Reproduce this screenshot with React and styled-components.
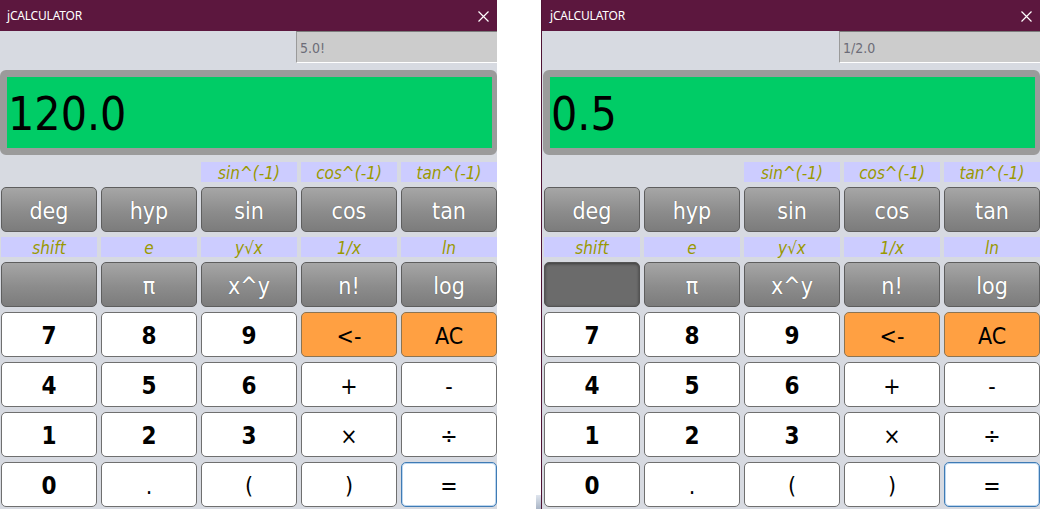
import React from 'react';
import styled, { createGlobalStyle, css } from 'styled-components';

const GlobalStyle = createGlobalStyle`
  html, body {
    margin: 0;
    padding: 0;
    background: #fff;
    overflow: hidden;
  }
  body {
    font-family: "DejaVu Sans Condensed", "DejaVu Sans", sans-serif;
  }
`;

// layout of the keypad, row by row
const ROWS = [
  { type: 'label', items: [null, null, 'sin^(-1)', 'cos^(-1)', 'tan^(-1)'] },
  { type: 'keys', items: [['deg', 'fn'], ['hyp', 'fn'], ['sin', 'fn'], ['cos', 'fn'], ['tan', 'fn']] },
  { type: 'label', items: ['shift', 'e', 'y√x', '1/x', 'ln'] },
  { type: 'keys', items: [['', 'shift'], ['π', 'fn'], ['x^y', 'fn'], ['n!', 'fn'], ['log', 'fn']] },
  { type: 'keys', items: [['7', 'num'], ['8', 'num'], ['9', 'num'], ['<-', 'warn'], ['AC', 'warn']] },
  { type: 'keys', items: [['4', 'num'], ['5', 'num'], ['6', 'num'], ['+', 'op'], ['-', 'op']] },
  { type: 'keys', items: [['1', 'num'], ['2', 'num'], ['3', 'num'], ['×', 'op'], ['÷', 'op']] },
  { type: 'keys', items: [['0', 'num'], ['.', 'op'], ['(', 'op'], [')', 'op'], ['=', 'eq']] },
];

const CloseIcon = () => (
  <svg width="11" height="11" viewBox="0 0 11 11">
    <path d="M0.5 0.5 L10.5 10.5 M10.5 0.5 L0.5 10.5" stroke="#fff" strokeWidth="1.2" fill="none" />
  </svg>
);

const Calculator = ({ expr, value, shiftOn, offset }) => (
  <Frame $offset={offset}>
    <TitleBar>
      <span>jCALCULATOR</span>
      <CloseIcon />
    </TitleBar>
    <ExprRow>
      <Expr>{expr}</Expr>
    </ExprRow>
    <Panel>
      <Display>{value}</Display>
      <Keys>
        {ROWS.map((row, r) =>
          row.items.map((item, c) => {
            if (row.type === 'label') {
              return item === null
                ? <Blank key={`${r}-${c}`} />
                : <Label key={`${r}-${c}`}>{item}</Label>;
            }
            const [text, kind] = item;
            const k = kind === 'shift' ? (shiftOn ? 'pressed' : 'fn') : kind;
            return <Key key={`${r}-${c}`} $kind={k}>{text}</Key>;
          })
        )}
      </Keys>
    </Panel>
  </Frame>
);

export default function App() {
  return (
    <>
      <GlobalStyle />
      <Desk>
        <Calculator expr="5.0!" value="120.0" offset={-2} />
        <Gap>
          <Chip />
        </Gap>
        <Calculator expr="1/2.0" value="0.5" shiftOn />
      </Desk>
    </>
  );
}

const Desk = styled.div`
  display: flex;
  width: 1042px;
  height: 509px;
  overflow: hidden;
`;

const Gap = styled.div`
  flex: none;
  width: 44px;
  display: flex;
  flex-direction: column;
  justify-content: flex-end;
  align-items: flex-end;
`;

const Chip = styled.div`
  width: 5px;
  height: 14px;
  background: linear-gradient(#dfe5ee, #a9b5c6);
`;

const Frame = styled.div`
  flex: none;
  width: 498px;
  height: 509px;
  margin-left: ${p => p.$offset || 0}px;
  border-left: 1px solid #4e1334;
  background: #d7dae1;
  display: flex;
  flex-direction: column;
`;

const TitleBar = styled.div`
  height: 31px;
  flex: none;
  background: #5c173e;
  color: #fff;
  font-family: "Noto Sans", sans-serif;
  font-size: 12px;
  letter-spacing: -0.2px;
  display: flex;
  align-items: center;
  justify-content: space-between;
  padding: 0 8px;
  svg { margin-top: 1px; }
`;

const ExprRow = styled.div`
  height: 32px;
  flex: none;
  display: flex;
  justify-content: flex-end;
`;

const Expr = styled.div`
  width: 201px;
  box-sizing: border-box;
  background: #cccccc;
  border-top: 1px solid #7c7c7c;
  border-left: 1px solid #9a9a9a;
  border-bottom: 1px solid #ffffff;
  color: #6c6c78;
  font-family: "DejaVu Sans Condensed", sans-serif;
  font-size: 14px;
  display: flex;
  align-items: center;
  padding: 1px 0 0 3px;
`;

const Panel = styled.div`
  padding-left: 1px;
  width: 497px;
`;

const Display = styled.div`
  margin-top: 7px;
  height: 85px;
  box-sizing: border-box;
  border: 7px solid #9b9b9b;
  border-right-width: 5px;
  border-radius: 6px;
  background: #00cc66;
  color: #000;
  font-size: 46px;
  line-height: 1;
  display: flex;
  align-items: center;
  padding: 2px 0 0 1px;
`;

const Keys = styled.div`
  margin: 7px 0 0 1px;
  display: grid;
  grid-template-columns: repeat(5, 96px);
  grid-template-rows: 20px 45px 20px 45px 45px 45px 45px 45px;
  column-gap: 4px;
  row-gap: 5px;
`;

const Blank = styled.span``;

const Label = styled.div`
  background: #ccccff;
  color: #999900;
  font-style: italic;
  font-size: 17px;
  display: flex;
  align-items: center;
  justify-content: center;
  padding-top: 1px;
`;

const kinds = {
  fn: css`
    background: linear-gradient(#a6a6a6, #8c8c8c 55%, #7c7c7c);
    border: 1px solid #5e5e5e;
    color: #fff;
    text-shadow: 0 0 1px rgba(0, 0, 0, 0.4);
  `,
  pressed: css`
    background: #6b6b6b;
    border: 1px solid #545454;
    box-shadow: inset 0 1px 3px rgba(0, 0, 0, 0.45);
  `,
  num: css`
    background: #fff;
    border: 1px solid #6f6f6f;
    color: #000;
    font-weight: bold;
    font-size: 24px;
  `,
  op: css`
    background: #fff;
    border: 1px solid #6f6f6f;
    color: #000;
  `,
  warn: css`
    background: #ffa042;
    border: 1px solid #8c7452;
    color: #000;
  `,
  eq: css`
    background: #fff;
    border: 1px solid #3f7bb4;
    box-shadow: inset 0 0 0 1px #bcd6ef;
    color: #000;
  `,
};

const Key = styled.button`
  font-family: inherit;
  font-size: 23px;
  padding: 2px 0 0;
  margin: 0;
  border-radius: 5px;
  display: flex;
  align-items: center;
  justify-content: center;
  outline: none;
  ${p => kinds[p.$kind]}
`;
